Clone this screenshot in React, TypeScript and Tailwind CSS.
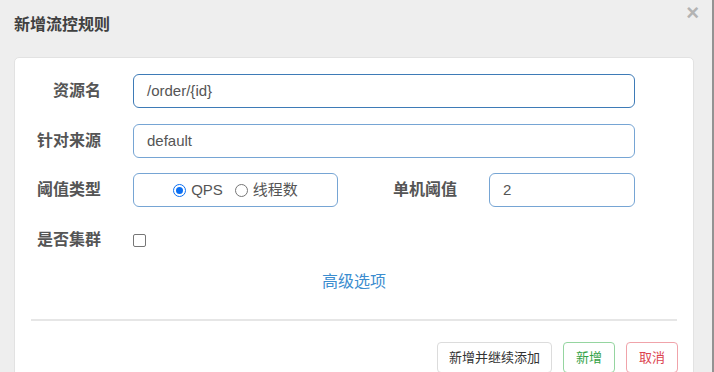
import React from 'react';

const font = { fontFamily: '"Liberation Sans", "Noto Sans CJK SC", sans-serif' };

const Label = ({ text, className = '' }: { text: string; className?: string }) => (
  <div className={`w-[86px] shrink-0 text-right text-[16px] font-bold text-[#555] ${className}`}>{text}</div>
);

const Radio = ({ checked }: { checked?: boolean }) =>
  checked ? (
    <span className="flex h-[13px] w-[13px] shrink-0 items-center justify-center rounded-full border-[1.5px] border-[#0b6ff2] bg-white">
      <span className="h-[7px] w-[7px] rounded-full bg-[#0b6ff2]" />
    </span>
  ) : (
    <span className="block h-[13px] w-[13px] shrink-0 rounded-full border border-[#767676] bg-white" />
  );

export default function App() {
  return (
    <div className="flex h-[372px] w-[714px] overflow-hidden" style={font}>
      <div className="relative flex-1 bg-[#eeeeee]">
        {/* header */}
        <div className="pl-[14px] pt-[15px] text-[16px] font-bold leading-[20px] text-[#404040]">新增流控规则</div>
        <div className="absolute right-[13px] top-[-2px] text-[22px] font-bold leading-[30px] text-[#b3b3b3]">×</div>

        {/* card */}
        <div className="ml-[14px] mt-[22px] h-[340px] w-[680px] rounded-[5px] border border-[#e2e2e2] bg-white pt-[16px]">
          <div className="flex h-[34px] items-center">
            <Label text="资源名" />
            <div className="ml-[32px] flex h-[34px] w-[502px] items-center rounded-[6px] border border-[#3e7bb7] pl-[13px] text-[15px] text-[#555]">
              /order/{'{'}id{'}'}
            </div>
          </div>

          <div className="mt-[16px] flex h-[34px] items-center">
            <Label text="针对来源" />
            <div className="ml-[32px] flex h-[34px] w-[502px] items-center rounded-[6px] border border-[#76a5d4] pl-[13px] text-[15px] text-[#555]">
              default
            </div>
          </div>

          <div className="mt-[15px] flex h-[34px] items-center">
            <Label text="阈值类型" />
            <div className="ml-[32px] flex h-[34px] w-[205px] items-center justify-center rounded-[6px] border border-[#76a5d4] text-[15px] text-[#555]">
              <Radio checked />
              <span className="ml-[5px]">QPS</span>
              <span className="ml-[12px] flex">
                <Radio />
              </span>
              <span className="ml-[5px]">线程数</span>
            </div>
            <Label text="单机阈值" className="ml-[33px]" />
            <div className="ml-[32px] flex h-[34px] w-[146px] items-center rounded-[6px] border border-[#76a5d4] pl-[13px] text-[15px] text-[#555]">
              2
            </div>
          </div>

          <div className="mt-[16px] flex h-[34px] items-center">
            <Label text="是否集群" />
            <span className="ml-[32px] h-[13px] w-[13px] rounded-[2px] border border-[#767676] bg-white" />
          </div>

          <div className="mt-[15px] text-center text-[16px] leading-[20px] text-[#3c8dcf]">高级选项</div>

          <div className="mx-[16px] mt-[27px] h-[2px] bg-[#e6e6e6]" />

          <div className="mr-[15px] mt-[21px] flex justify-end gap-[11px] text-[13px]">
            <button className="h-[31px] rounded-[4px] border border-[#dcdcdc] bg-white px-[11px] text-[#333]">新增并继续添加</button>
            <button className="h-[31px] rounded-[4px] border border-[#95d5a0] bg-white px-[12px] text-[#33a145]">新增</button>
            <button className="h-[31px] rounded-[4px] border border-[#f0a3aa] bg-white px-[12px] text-[#dc4450]">取消</button>
          </div>
        </div>
      </div>
      <div className="w-[2px] bg-[#939393]" />
    </div>
  );
}
